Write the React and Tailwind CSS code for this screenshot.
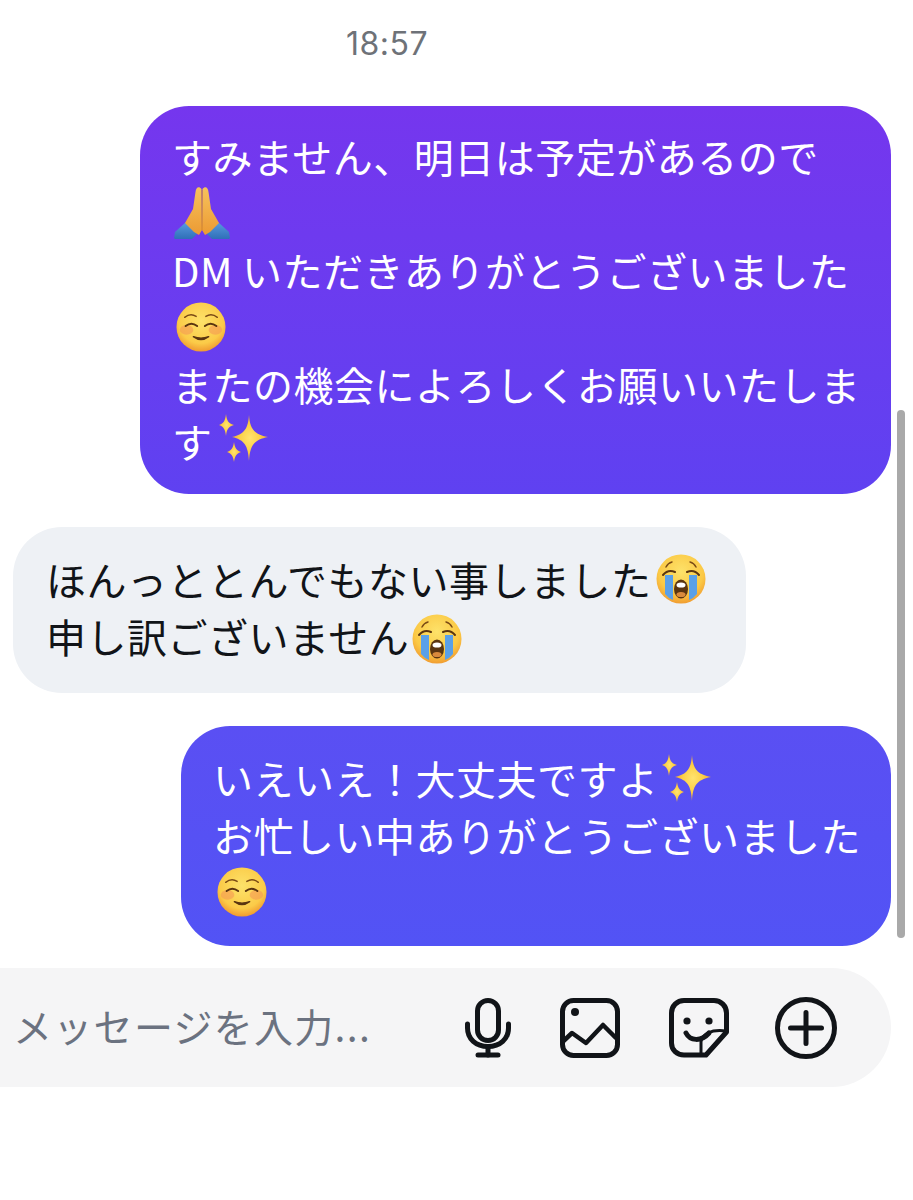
const font = { fontFamily: '"Noto Sans CJK JP", "Noto Sans", sans-serif' };

function Pray() {
  return (
    <svg width="58" height="54" viewBox="0 0 58 54" className="ml-[2px] block">
      <defs>
        <linearGradient id="palm" x1="0" y1="0" x2="0" y2="1">
          <stop offset="0" stopColor="#f6c25c" />
          <stop offset="1" stopColor="#ec9a33" />
        </linearGradient>
        <linearGradient id="sleeve" x1="0" y1="0" x2="0" y2="1">
          <stop offset="0" stopColor="#5a9be0" />
          <stop offset="1" stopColor="#2f6fb8" />
        </linearGradient>
      </defs>
      <path d="M0 52 L1 46 L12 36 L24 47 L18 53 L1 53 Z" fill="url(#sleeve)" />
      <path d="M56 52 L55 46 L44 36 L32 47 L38 53 L55 53 Z" fill="url(#sleeve)" />
      <path d="M27.5 3 C25 0 22 1 21.5 6 L19 23 L11 37 L20 46 L25 49 L28 44 Z" fill="url(#palm)" />
      <path d="M28.5 3 C31 0 34 1 34.5 6 L37 23 L45 37 L36 46 L31 49 L28 44 Z" fill="url(#palm)" />
      <path d="M28 4 L28 44" stroke="#c97f2a" strokeWidth="0.8" />
    </svg>
  );
}

function Relieved() {
  return (
    <svg width="50" height="50" viewBox="0 0 52 52" className="ml-[4px] block">
      <defs>
        <radialGradient id="face" cx="0.5" cy="0.38" r="0.65">
          <stop offset="0" stopColor="#fde26a" />
          <stop offset="0.7" stopColor="#fbcb48" />
          <stop offset="1" stopColor="#ee922c" />
        </radialGradient>
      </defs>
      <circle cx="26" cy="26" r="25.5" fill="url(#face)" />
      <ellipse cx="11" cy="29" rx="7" ry="5" fill="#f59a55" opacity="0.6" />
      <ellipse cx="41" cy="29" rx="7" ry="5" fill="#f59a55" opacity="0.6" />
      <path d="M9 16 Q15 11 21 15" stroke="#7a4a15" strokeWidth="1.4" fill="none" strokeLinecap="round" />
      <path d="M31 15 Q37 11 43 16" stroke="#7a4a15" strokeWidth="1.4" fill="none" strokeLinecap="round" />
      <path d="M10 25 Q16 20 22 25" stroke="#5a3510" strokeWidth="2" fill="none" strokeLinecap="round" />
      <path d="M30 25 Q36 20 42 25" stroke="#5a3510" strokeWidth="2" fill="none" strokeLinecap="round" />
      <path d="M18 36 Q26 42 34 36 Q26 39 18 36 Z" fill="#5a3510" stroke="#5a3510" strokeWidth="1.4" strokeLinejoin="round" />
    </svg>
  );
}

function Crying({ className }) {
  return (
    <svg width="50" height="50" viewBox="0 0 50 50" className={className}>
      <defs>
        <radialGradient id="cry" cx="0.5" cy="0.35" r="0.7">
          <stop offset="0" stopColor="#fde26a" />
          <stop offset="0.65" stopColor="#fbc945" />
          <stop offset="1" stopColor="#ee922c" />
        </radialGradient>
      </defs>
      <circle cx="25" cy="25" r="24.5" fill="url(#cry)" />
      <path d="M9 21 L17 21 L17 46 Q12 44 9 40 Z" fill="#5aa0e8" />
      <path d="M33 21 L41 21 L41 40 Q38 44 33 46 Z" fill="#5aa0e8" />
      <path d="M7 21 Q12 15 19 18" stroke="#5a3510" strokeWidth="2" fill="none" strokeLinecap="round" />
      <path d="M31 18 Q38 15 43 21" stroke="#5a3510" strokeWidth="2" fill="none" strokeLinecap="round" />
      <path d="M10 13 Q12 9 16 8" stroke="#7a4a15" strokeWidth="1.5" fill="none" strokeLinecap="round" />
      <path d="M34 8 Q38 9 40 13" stroke="#7a4a15" strokeWidth="1.5" fill="none" strokeLinecap="round" />
      <ellipse cx="25" cy="35" rx="7" ry="9.5" fill="#5a3510" />
      <ellipse cx="25" cy="31" rx="4.5" ry="2.6" fill="#ffffff" />
      <ellipse cx="25" cy="40.5" rx="4.5" ry="2.6" fill="#d98a3c" />
    </svg>
  );
}

function Sparkles({ className }) {
  return (
    <svg width="50" height="48" viewBox="0 0 50 48" className={className}>
      <defs>
        <radialGradient id="spark" cx="0.5" cy="0.5" r="0.5">
          <stop offset="0" stopColor="#ffe36f" />
          <stop offset="0.55" stopColor="#fcd047" />
          <stop offset="1" stopColor="#f0a838" />
        </radialGradient>
      </defs>
      <path d="M30 1 C31 14 34 20 49 23 C34 26 31 32 30 47 C29 32 26 26 13 23 C26 20 29 14 30 1 Z" fill="url(#spark)" />
      <path d="M7 0 C8 7 9 9 15 11 C9 13 8 15 7 22 C6 15 5 13 0 11 C5 9 6 7 7 0 Z" fill="url(#spark)" />
      <path d="M15 28 C16 34 17 36 22 38 C17 40 16 42 15 48 C14 42 13 40 8 38 C13 36 14 34 15 28 Z" fill="url(#spark)" />
    </svg>
  );
}

function Line({ children }) {
  return <div className="flex h-[57px] items-center whitespace-nowrap">{children}</div>;
}

function Mic() {
  return (
    <svg width="46" height="60" viewBox="0 0 46 60" fill="none" stroke="#111418" strokeWidth="5" strokeLinecap="round" strokeLinejoin="round">
      <rect x="12.5" y="2.5" width="21" height="40" rx="10.5" />
      <path d="M2.5 26 V30 C2.5 41 11 48.5 23 48.5 C35 48.5 43.5 41 43.5 30 V26" />
      <path d="M23 48.5 V57" />
      <path d="M13 57 H33" />
    </svg>
  );
}

function ImageIcon() {
  return (
    <svg width="60" height="60" viewBox="0 0 60 60" fill="none" stroke="#111418" strokeWidth="5" strokeLinecap="round" strokeLinejoin="round">
      <rect x="2.5" y="2.5" width="55" height="55" rx="11" />
      <circle cx="15" cy="14" r="4" fill="#111418" stroke="none" />
      <path d="M3.5 43 L12 35 L26 45 L43 27 L56 40" strokeWidth="4.5" />
    </svg>
  );
}

function Sticker() {
  return (
    <svg width="60" height="60" viewBox="0 0 60 60" fill="none" stroke="#111418" strokeWidth="5" strokeLinecap="round" strokeLinejoin="round">
      <path d="M37 57 H15 C8 57 2.5 52 2.5 45 V15 C2.5 8 8 2.5 15 2.5 H45 C52 2.5 57.5 8 57.5 15 V34 Z" />
      <path d="M32 55 V44 C33 36 42 31 57 33" strokeWidth="3" />
      <path d="M17 35 C21 43 32 44 40 35" />
      <circle cx="18" cy="23" r="3.6" fill="#111418" stroke="none" />
      <circle cx="40" cy="23" r="3.6" fill="#111418" stroke="none" />
    </svg>
  );
}

function Plus() {
  return (
    <svg width="62" height="62" viewBox="0 0 62 62" fill="none" stroke="#111418" strokeWidth="5" strokeLinecap="round">
      <circle cx="31" cy="31" r="28.5" />
      <path d="M31 15.5 V46.5 M15.5 31 H46.5" />
    </svg>
  );
}

export default function App() {
  return (
    <div className="relative flex h-[1200px] w-[913px] flex-col overflow-hidden bg-white" style={font}>
      <div className="h-[106px] pl-[346px] pt-[22px] text-[32px] leading-[44px] tracking-[0.5px] text-[#6e7278]" style={{ fontFamily: '"Inter", "Noto Sans", sans-serif' }}>18:57</div>

      <div className="ml-[140px] h-[388px] w-[751px] rounded-[49px] bg-gradient-to-b from-[#7536ee] to-[#5f41f1] pl-[32px] pt-[21px] text-[40px] tracking-[0.5px] text-white">
        <Line>すみません、明日は予定があるので</Line>
        <Line><Pray /></Line>
        <Line><span className="mr-[9px]">DM</span>いただきありがとうございました</Line>
        <Line><Relieved /></Line>
        <Line>またの機会によろしくお願いいたしま</Line>
        <Line>す<Sparkles className="-mt-[6px] ml-[6px] block" /></Line>
      </div>

      <div className="ml-[13px] mt-[33px] h-[166px] w-[733px] rounded-[49px] bg-[#eef1f5] pl-[33px] pt-[23px] text-[40px] tracking-[0.5px] text-[#111418]">
        <Line>ほんっととんでもない事しました<Crying className="ml-[4px] block" /></Line>
        <Line>申し訳ございません<Crying className="ml-[3px] mt-[6px] block" /></Line>
      </div>

      <div className="ml-[181px] mt-[33px] h-[220px] w-[710px] rounded-[49px] bg-gradient-to-b from-[#5a4ff3] to-[#5253f5] pl-[32px] pt-[23px] text-[40px] tracking-[0.5px] text-white">
        <Line>いえいえ！大丈夫ですよ<Sparkles className="ml-[3px] block" /></Line>
        <Line>お忙しい中ありがとうございました</Line>
        <Line><Relieved /></Line>
      </div>

      <div className="mt-[22px] flex h-[119px] w-[891px] items-center rounded-r-[60px] bg-[#f5f5f6] pl-[13px]">
        <div className="mb-[4px] w-[452px] whitespace-nowrap text-[39px] tracking-[1.3px] text-[#6b7280]">メッセージを入力...</div>
        <Mic />
        <div className="ml-[49px]"><ImageIcon /></div>
        <div className="ml-[49px]"><Sticker /></div>
        <div className="ml-[46px]"><Plus /></div>
      </div>

      <div className="absolute left-[897px] top-[410px] h-[528px] w-[8px] rounded-full bg-[#a9a9a9]" />
    </div>
  );
}
